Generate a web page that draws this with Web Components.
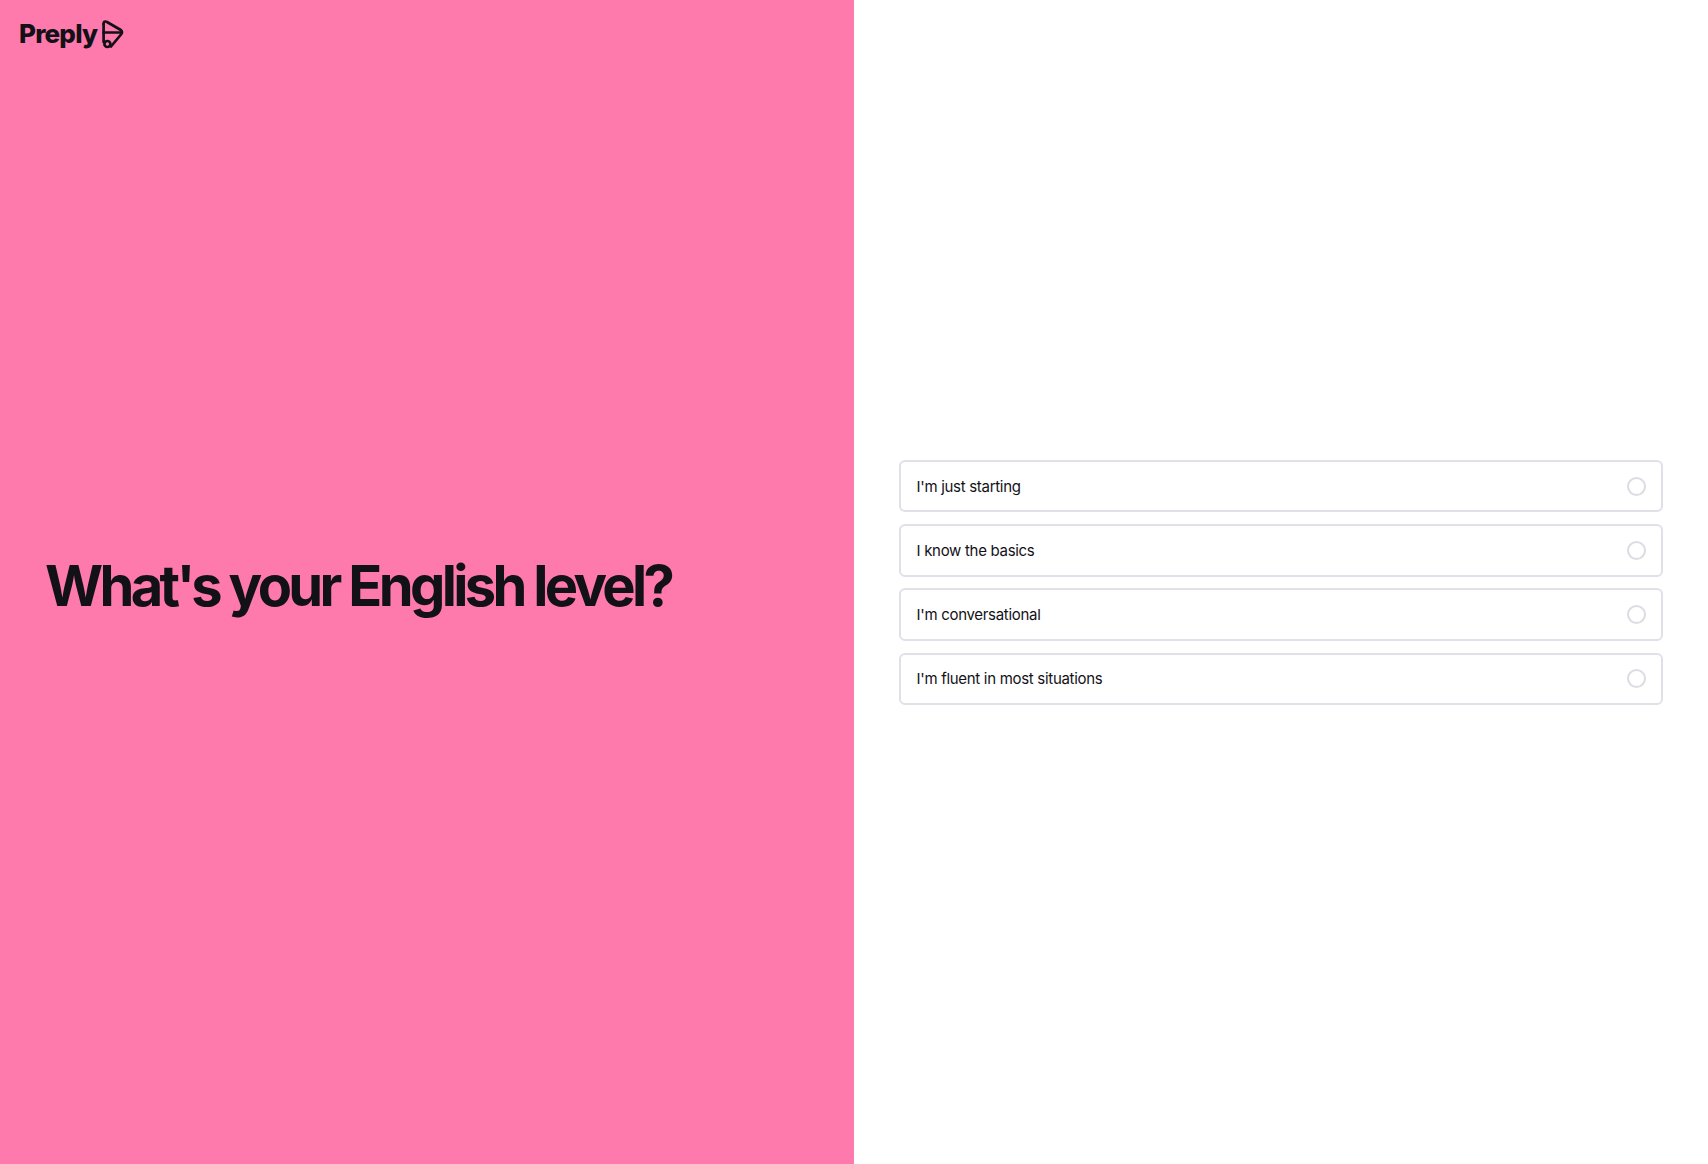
<!DOCTYPE html>
<html>
<head>
<meta charset="utf-8">
<style>
html, body { margin: 0; height: 100%; }
body { font-family: "Inter", "Liberation Sans", sans-serif; color: #121117; }
</style>
</head>
<body>
<quiz-page>
    <preply-logo slot="logo"></preply-logo>
    <span slot="title">What's your English level?</span>
    <level-option>I'm just starting</level-option>
    <level-option>I know the basics</level-option>
    <level-option>I'm conversational</level-option>
    <level-option>I'm fluent in most situations</level-option>
</quiz-page>
<script>
(function() {
    class QuizPage extends HTMLElement {
        constructor() {
            super();
            this.attachShadow({ mode: 'open' });
            this.shadowRoot.innerHTML = `
            <style>
                :host { display: grid; grid-template-columns: 854px 1fr; height: 1164px; }
                .left {
                    background: #ff7aac;
                    display: grid;
                    grid-template-rows: 1fr auto 1fr;
                    padding: 0 45px;
                }
                .logo { padding-top: 19px; margin-left: -26px; }
                h1 {
                    margin: 0;
                    padding-top: 8px;
                    font: 700 56px/64px "Inter", "Liberation Sans", sans-serif;
                    letter-spacing: -3.65px;
                }
                .right {
                    display: flex;
                    flex-direction: column;
                    justify-content: center;
                    gap: 11.8px;
                    padding: 1px 45px 0;
                }
            </style>
            <section class="left">
                <div class="logo"><slot name="logo"></slot></div>
                <h1><slot name="title"></slot></h1>
            </section>
            <section class="right"><slot></slot></section>`;
        }
    }

    class LevelOption extends HTMLElement {
        constructor() {
            super();
            this.attachShadow({ mode: 'open' });
            this.shadowRoot.innerHTML = `
            <style>
                :host {
                    display: flex;
                    align-items: center;
                    justify-content: space-between;
                    box-sizing: border-box;
                    height: 52.5px;
                    padding: 0 15.5px;
                    border: 2px solid #e0e0e8;
                    border-radius: 6px;
                    font: 400 15px/24px "Inter", "Liberation Sans", sans-serif;
                    letter-spacing: -0.3px;
                    color: #121117;
                }
                .label { padding-top: 1px; }
                .radio {
                    box-sizing: border-box;
                    width: 19px;
                    height: 19px;
                    border: 2px solid #dcdce5;
                    border-radius: 50%;
                }
            </style>
            <span class="label"><slot></slot></span>
            <span class="radio"></span>`;
        }
    }

    class PreplyLogo extends HTMLElement {
        constructor() {
            super();
            this.attachShadow({ mode: 'open' });
            this.shadowRoot.innerHTML = `
            <style>
                :host { display: inline-flex; align-items: center; gap: 3px; }
                span { font: 800 26px/30px "Inter", "Liberation Sans", sans-serif; letter-spacing: -0.8px; }
                svg { display: block; }
            </style>
            <span>Preply</span>
            <svg width="24" height="30" viewBox="0 0 24 30" fill="none" stroke="#121117" stroke-width="2.7" stroke-linejoin="round" stroke-linecap="round">
                <path d="M3.6 5 Q3.6 1.4 7 3 L20.8 11 Q23 13 21 15.5 L11 27.5"/>
                <path d="M3.6 5 V23"/>
                <path d="M3.6 13.5 H21.5"/>
                <circle cx="7.4" cy="25" r="3"/>
            </svg>`;
        }
    }

    customElements.define('quiz-page', QuizPage);
    customElements.define('level-option', LevelOption);
    customElements.define('preply-logo', PreplyLogo);
})();
</script>
</body>
</html>
